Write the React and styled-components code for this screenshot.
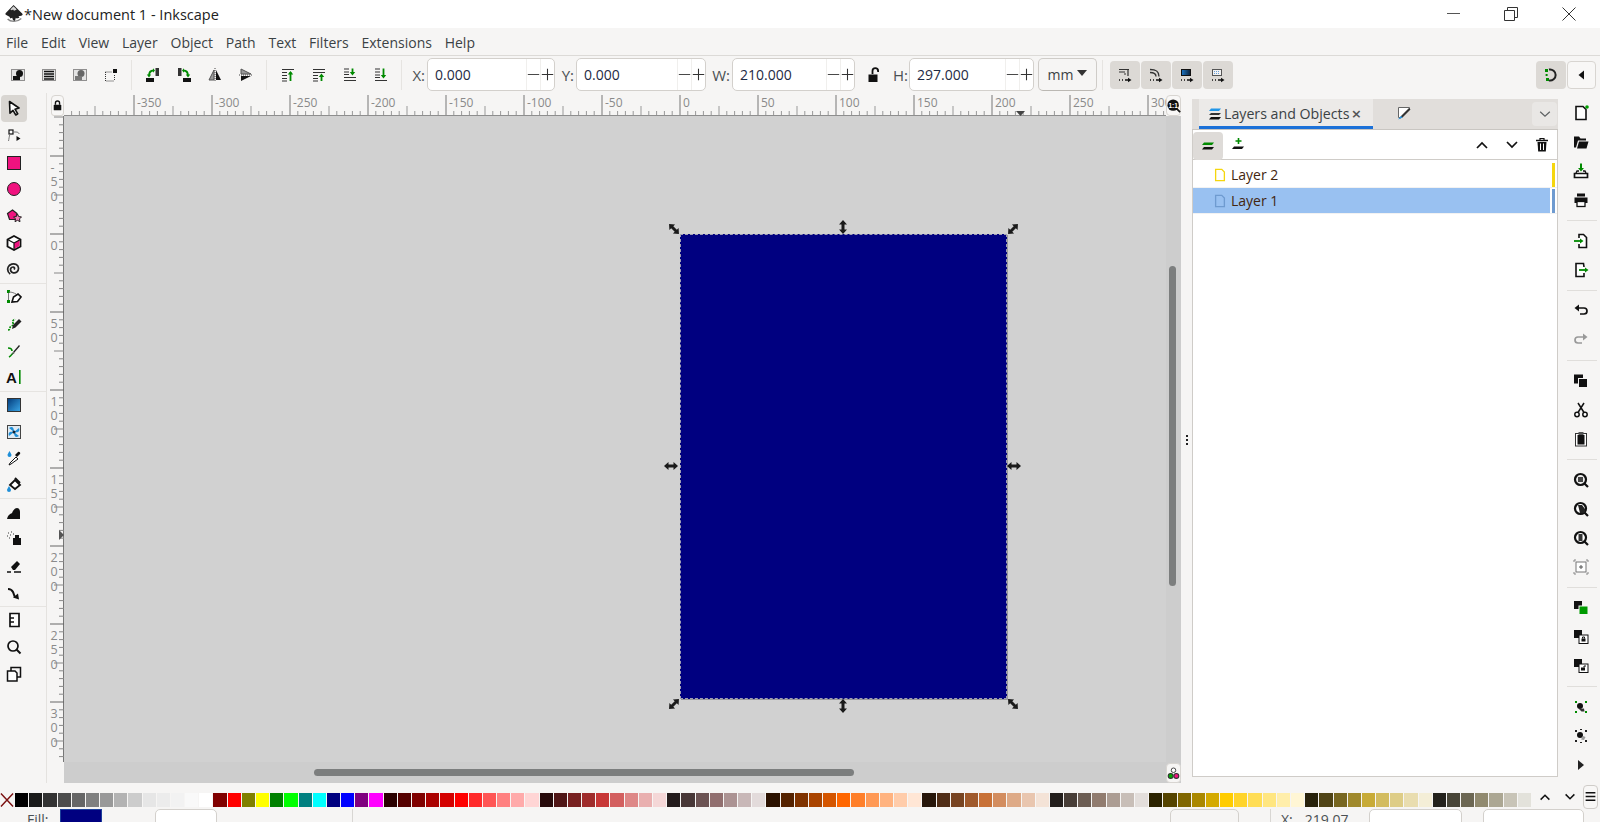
import styled, { createGlobalStyle } from 'styled-components'

const GlobalStyle = createGlobalStyle`
	html, body { margin: 0; padding: 0; height: 100%; overflow: hidden; background: #f6f5f4; }
	* { box-sizing: border-box; }
	body { font-family: 'Open Sans', 'Liberation Sans', sans-serif; color: #2e3436; }
`

const G = '#008a00'
const P = '#f0127f'
const K = '#111'

const dotted = <rect x='1.5' y='2.5' width='13' height='11' fill='#e4e4e4' stroke='#333' strokeDasharray='1 1' />
const lines = (d) => <path d={d} fill='none' stroke='#333' strokeWidth='1.2' />
const doc = <path d='M3 1.5h7l3 3v10H3z' fill='#fff' stroke={K} strokeWidth='1.6' />

const glyphs = {
	selAll: <>{dotted}<circle cx='9.5' cy='6.5' r='3.5' fill={K} /><rect x='3' y='9' width='7' height='4' fill={K} /></>,
	selLayers: <>{dotted}<path d='M3 4.5h10M3 7h10M3 9.5h10M3 12h10' stroke={K} strokeWidth='1.4' /></>,
	selInvert: <>{dotted}<circle cx='9' cy='6.5' r='3.5' fill='#666' /><rect x='3' y='9' width='7' height='4' fill='#777' /></>,
	selNone: <><path d='M2.5 5v9h9' fill='none' stroke='#333' strokeDasharray='1 1' /><rect x='10' y='2' width='4' height='4' fill={K} /><path d='M2.5 5H9M11.5 8v6' stroke='#333' strokeDasharray='1 1' /></>,
	rotCcw: <><rect x='1' y='11' width='8' height='4' fill={K} /><rect x='10.5' y='1' width='3.5' height='8' fill='#333' /><path d='M8.5 3.5C6 3.5 4 5 4 9' fill='none' stroke={G} strokeWidth='1.8' /><path d='M1.8 7.5h4.4L4 10.5zM8 1.2v4.6l2-2.3z' fill={G} /></>,
	rotCw: <><rect x='7' y='11' width='8' height='4' fill={K} /><rect x='2' y='1' width='3.5' height='8' fill='#333' /><path d='M7.5 3.5C10 3.5 12 5 12 9' fill='none' stroke={G} strokeWidth='1.8' /><path d='M14.2 7.5H9.8l2.2 3zM8 1.2v4.6L6 3.5z' fill={G} /></>,
	flipH: <><path d='M7 3v10H2z' fill='#999' stroke='#555' /><path d='M9 3v10h5z' fill={K} /><path d='M8 1v14' stroke='#444' strokeDasharray='1 1' /></>,
	flipV: <><path d='M3 7h10L3 2z' fill='#999' stroke='#555' /><path d='M3 9h10L3 14z' fill={K} /><path d='M1 8h14' stroke='#444' strokeDasharray='1 1' /></>,
	raiseTop: <>{lines('M2 2.5h12M2 5.5h5M2 8.5h5M2 11.5h5M2 14h5')}<path d='M10.5 14V5' stroke={G} strokeWidth='1.8' /><path d='M7.8 7.5l2.7-3.5 2.7 3.5z' fill={G} /></>,
	raise: <>{lines('M2 2.5h12M2 5.5h12M2 8.5h5M2 11.5h5M2 14h5')}<path d='M10.5 14V8' stroke={G} strokeWidth='1.8' /><path d='M7.8 10l2.7-3.5 2.7 3.5z' fill={G} /></>,
	lower: <>{lines('M2 2h5M2 5h5M2 7.5h5M2 10.5h12M2 13.5h12')}<path d='M10.5 1.5V7' stroke={G} strokeWidth='1.8' /><path d='M7.8 5l2.7 3.5L13.2 5z' fill={G} /></>,
	lowerBottom: <>{lines('M2 2h5M2 5h5M2 8h5M2 10.5h5M2 13.5h12')}<path d='M10.5 1.5V10' stroke={G} strokeWidth='1.8' /><path d='M7.8 8l2.7 3.5L13.2 8z' fill={G} /></>,
	tfA: <>{lines('M2 2.5h10M2 5h6M11 3v6M7 7h2')}<path d='M2 13h1M5 13h1M8 13h4' stroke={K} strokeWidth='1.4' /><path d='M11 10.8l3.5 2.2-3.5 2.2z' fill={K} /></>,
	tfB: <><path d='M2 2.5c5 0 9 1 9 7M2 5.5c3 0 6 .5 6 4' fill='none' stroke='#333' strokeWidth='1.3' /><path d='M2 13h1M5 13h1M8 13h4' stroke={K} strokeWidth='1.4' /><path d='M11 10.8l3.5 2.2-3.5 2.2z' fill={K} /></>,
	tfC: <><defs><linearGradient id='tfc' x1='0' y1='0' x2='1' y2='0'><stop offset='0' stopColor='#1c77c8' /><stop offset='1' stopColor='#0c2036' /></linearGradient></defs><rect x='2.5' y='2.5' width='9' height='6' fill='url(#tfc)' stroke={K} /><path d='M2 13h1M5 13h1M8 13h4' stroke={K} strokeWidth='1.4' /><path d='M11 10.8l3.5 2.2-3.5 2.2z' fill={K} /></>,
	tfD: <><rect x='2.5' y='2.5' width='9' height='6' fill='#f2f2f2' stroke='#555' /><path d='M4 4.5h6M4 6.5h6' stroke='#6a9fd8' strokeDasharray='1 1' /><path d='M2 13h1M5 13h1M8 13h4' stroke={K} strokeWidth='1.4' /><path d='M11 10.8l3.5 2.2-3.5 2.2z' fill={K} /></>,
	snap: <><path d='M6 2.5a5.6 5.6 0 1 1 0 11' fill='none' stroke='#222' strokeWidth='2' /><rect x='2' y='2' width='3' height='3' fill={G} /><rect x='2.6' y='7' width='2' height='2' fill={G} /><rect x='3' y='11' width='3' height='3' fill={G} /></>,
	left: <path d='M10 3.5v9L4.5 8z' fill={K} />,
	lock: <><rect x='2.5' y='7' width='11' height='8' rx='1' fill={K} /><path d='M5 7V4.5a3 3 0 0 1 6 0V7' fill='none' stroke={K} strokeWidth='2' /></>,
	unlock: <><rect x='2.5' y='7.5' width='9' height='7.5' fill={K} /><path d='M6.5 7V4a2.8 2.8 0 0 1 5.6 0v1' fill='none' stroke={K} strokeWidth='1.8' /></>,
	select: <path d='M3.5 1.5l9.5 6.5-4 1.2 2.8 4.6-2 1.2-2.8-4.6-3 2.8z' fill='#fff' stroke={K} strokeWidth='1.6' strokeLinejoin='round' />,
	node: <><rect x='3' y='3' width='4' height='4' fill='#fff' stroke={K} strokeWidth='1.2' /><path d='M7 5h3c2 0 3 1 3 2M4 7c-1 3-1 5-1.500 7' fill='none' stroke='#777' /><path d='M10.500 9l4 2.500-4 2.500z' fill={K} /></>,
	rect: <rect x='1.5' y='1.5' width='13' height='13' fill={P} stroke='#222' />,
	circle: <circle cx='8' cy='8' r='6.5' fill={P} stroke='#222' />,
	star: <><path d='M6.500 2l4.500 3.500-1.500 6H3.500l-2-6z' fill={P} stroke='#222' strokeWidth='1.2' /><path d='M11.500 6l1.200 2.600 2.800.3-2 2 .5 2.800-2.500-1.400-2.500 1.400.5-2.800-2-2 2.800-.3z' fill='#f77ab8' stroke='#222' /></>,
	cube: <><path d='M8 1l6.500 3.500v7L8 15l-6.500-3.500v-7z' fill='#fff' stroke={K} strokeWidth='1.8' /><path d='M8 8l5.500-3v6L8 14z' fill={P} /><path d='M8 8v6.500M8 8L2 4.800M8 8l6-3.200' stroke={K} strokeWidth='1.2' /></>,
	spiral: <path d='M8 8.500c1-1 .5-2.500-1-2.500-2 0-3 2-2.200 4 1 2 4 2.500 6 1 2.500-2 2.200-6-.5-7.500C7.500 2 3.500 3 2.200 6c-1 2.500 0 5.500 2 7' fill='none' stroke='#222' strokeWidth='1.7' />,
	pen: <><rect x='1' y='11' width='3' height='3' fill={G} /><rect x='1' y='1' width='3' height='3' fill={G} /><path d='M2.500 4v7M3 3c3 0 5 1 7 2' stroke='#777' fill='none' /><path d='M6 13l1.500-5L12 5l3 3-3.500 4.500z' fill='#fff' stroke={K} strokeWidth='1.6' /></>,
	pencil: <><path d='M2 14c3 0 1-3 3-4s3 0 2-3 1-3 2-4' fill='none' stroke={G} strokeWidth='1.6' strokeDasharray='2 1' /><path d='M7 9l6-6 2.500 2.500-6 6L6 13z' fill='#222' /></>,
	callig: <><path d='M3 14c2-1 3-3 4-4M2 5c2 0 4 1 4 3' fill='none' stroke={G} strokeWidth='1.6' /><path d='M7 9l6-7 1 1-6 7z' fill='#222' /><path d='M7 9l-1.500 3 3-1.800z' fill='#555' /></>,
	text: <><text x='0' y='14' fontFamily='Liberation Sans' fontSize='15' fontWeight='700' fill={K}>A</text><rect x='13' y='1' width='1.600' height='14' fill={G} /></>,
	gradient: <><defs><linearGradient id='grad' x1='0' y1='0' x2='1' y2='1'><stop offset='0' stopColor='#023a7a' /><stop offset='1' stopColor='#3ba7e8' /></linearGradient></defs><rect x='1.500' y='1.500' width='13' height='13' fill='url(#grad)' stroke='#333' /></>,
	mesh: <><rect x='1.500' y='1.500' width='13' height='13' fill='#dfeaf3' stroke='#444' /><path d='M8 8L3 4c3-2 5-1 5 4zM8 8l5-4c1 3 0 5-5 4zM8 8l5 4c-3 2-5 1-5-4zM8 8l-5 4c-1-3 0-5 5-4z' fill='#1f8fd8' /><circle cx='8' cy='8' r='1.500' fill='#123' /></>,
	dropper: <><path d='M5 14l-2 1 1-2 6-6 2 2z' fill='#fff' stroke={K} /><path d='M9 5l3-3c1-1 3 1 2 2l-3 3z' fill={K} /><path d='M3.500 1c1 2 2 3 2 4a2 2 0 0 1-4 0c0-1 1-2 2-4z' fill='#1f8fd8' /></>,
	bucket: <><path d='M4 8l5-5 5 5-5 4z' fill='#fff' stroke={K} strokeWidth='1.800' /><path d='M9 1l5 5' stroke={K} strokeWidth='2' /><path d='M3 9c1 2 2 3 2 4a2 2 0 0 1-4 0c0-1 1-2 2-4z' fill='#1f8fd8' /></>,
	tweak: <path d='M1 14c1-4 3-5 5-6 1-3 3-5 5-5 2 0 3 2 3 4v7z' fill={K} />,
	spray: <><rect x='7' y='7' width='8' height='7' fill={K} /><rect x='9' y='4' width='4' height='3' fill={K} /><path d='M2 2h1M5 1h1M1 5h1M4 4h1M7 3h1M3 7h1' stroke='#777' strokeWidth='1.500' /></>,
	eraser: <><path d='M5 9l6-6 3 3-5 6H7z' fill={K} /><path d='M1 14h4M8 14h7' stroke={K} strokeWidth='1.400' /></>,
	connector: <><path d='M2 4c3 0 4 1 5 3s1 4 2 5' fill='none' stroke={K} strokeWidth='2' /><path d='M7 12.500l6 2-1-6z' fill={K} /></>,
	pages: <><path d='M4 1.500h9v13H4z' fill='#fff' stroke={K} strokeWidth='1.700' /><path d='M4 6h4M4 10h4' stroke={K} strokeWidth='1.300' /></>,
	zoom: <><circle cx='7' cy='7' r='5' fill='none' stroke={K} strokeWidth='1.700' /><path d='M10.500 10.500L14.500 14.500' stroke={K} strokeWidth='2' /></>,
	pageset: <><path d='M5 5V1.500h9.500V11H11' fill='none' stroke={K} strokeWidth='1.500' /><path d='M1.500 5H9l2 2v8H1.500z' fill='#fff' stroke={K} strokeWidth='1.500' /></>,
	fileNew: <>{doc}<circle cx='14' cy='2' r='1.800' fill='#00a000' /></>,
	open: <path d='M1 13.500V2.500h5l1.500 2H13v2H5l-2 7zM4 14.500L6 7.500h9.500l-2 7z' fill={K} />,
	save: <><path d='M8 0.500v6' stroke={G} strokeWidth='2' /><path d='M5 5l3 3.500L11 5z' fill={G} /><path d='M1.500 10.500h13v4h-13z' fill='#fff' stroke={K} strokeWidth='1.700' /><path d='M3 10l1-2h2M13 10l-1-2h-2' stroke={K} strokeWidth='1.300' fill='none' /></>,
	print: <><rect x='4' y='1.500' width='8' height='3' fill={K} /><rect x='1.500' y='5.500' width='13' height='5.500' fill={K} /><rect x='4' y='9.500' width='8' height='5' fill='#fff' stroke={K} strokeWidth='1.300' /></>,
	importDoc: <><path d='M6 5V1.500h4.500l3 3v10H6V11' fill='#fff' stroke={K} strokeWidth='1.600' /><path d='M1 8h7' stroke={G} strokeWidth='1.800' /><path d='M7 5.500l3.500 2.500L7 10.500z' fill={G} /></>,
	exportDoc: <><path d='M11 5l-.5-3.500H3v13h8V11' fill='#fff' stroke={K} strokeWidth='1.600' /><path d='M6 8h7' stroke={G} strokeWidth='1.800' /><path d='M12 5.500L15.500 8 12 10.500z' fill={G} /></>,
	undo: <><path d='M5 5h6c2 0 3 1.500 3 3s-1 3-3 3H7' fill='none' stroke={K} strokeWidth='1.700' /><path d='M6 1.500v7L1.500 5z' fill={K} /></>,
	redo: <><path d='M11 5H5C3 5 2 6.500 2 8s1 3 3 3h4' fill='none' stroke='#999' strokeWidth='1.700' /><path d='M10 1.500v7L14.500 5z' fill='#999' /></>,
	copy: <><rect x='1' y='1.500' width='9' height='9' fill={K} /><rect x='5.500' y='5.500' width='9' height='9' fill={K} stroke='#f6f5f4' /></>,
	cut: <><circle cx='4' cy='12.500' r='2.200' fill='#fff' stroke={K} strokeWidth='1.500' /><circle cx='12' cy='12.500' r='2.200' fill='#fff' stroke={K} strokeWidth='1.500' /><path d='M5 10.500L11 1M11 10.500L5 1' stroke={K} strokeWidth='1.500' /></>,
	paste: <><rect x='2.500' y='2.500' width='11' height='12.500' fill='#fff' stroke='#333' /><rect x='4.500' y='4' width='7' height='9.500' fill={K} /><rect x='5.500' y='1' width='5' height='3' fill='#555' /></>,
	zoomSel: <><circle cx='7.500' cy='7.500' r='5.500' fill='#eee' stroke={K} strokeWidth='2.200' /><rect x='5' y='5' width='5' height='5' fill='#444' /><path d='M11.500 11.500L15 15' stroke={K} strokeWidth='2.200' /></>,
	zoomDraw: <><circle cx='7.500' cy='7.500' r='5.500' fill='#fff' stroke={K} strokeWidth='2.200' /><path d='M5 4h4l3 4v4H7z' fill='#222' /><path d='M11.500 11.500L15 15' stroke={K} strokeWidth='2.200' /></>,
	zoomPage: <><circle cx='7.500' cy='7.500' r='5.500' fill='#fff' stroke={K} strokeWidth='2.200' /><rect x='5.500' y='4' width='4' height='7' fill='#333' /><path d='M11.500 11.500L15 15' stroke={K} strokeWidth='2.200' /></>,
	zoomCenter: <><rect x='3' y='3' width='10' height='10' fill='#fff' stroke='#777' /><path d='M6 8h4M8 6v4' stroke='#555' /><path d='M1 3V1h2M13 1h2v2M1 13v2h2M13 15h2v-2' fill='none' stroke='#888' /></>,
	dupGreen: <><rect x='1' y='1' width='8' height='8' fill={K} /><rect x='6' y='6' width='9' height='8.500' fill='#009a00' stroke='#f6f5f4' /></>,
	clone: <><rect x='1' y='1' width='8' height='8' fill={K} /><rect x='6' y='6' width='9' height='8.500' fill='#fff' stroke={K} /><rect x='8.500' y='9.500' width='4' height='3' fill={K} /><path d='M9.500 9.500V8h2v1.500' stroke={K} fill='none' /></>,
	unclone: <><rect x='1' y='1' width='8' height='8' fill={K} /><rect x='6' y='6' width='9' height='8.500' fill='#fff' stroke={K} /><rect x='8' y='9.500' width='4' height='3' fill={K} /><path d='M11 9.500V8h2' stroke={K} fill='none' /></>,
	group: <><path d='M2 2h2v2H2zM12 2h2v2h-2zM2 12h2v2H2zM12 12h2v2h-2z' fill={G} /><circle cx='7' cy='7' r='3' fill={K} /><path d='M6 10l5-.5.500 3-3 0z' fill='#333' /></>,
	ungroup: <><path d='M2 2h2v2H2zM12 2h2v2h-2zM2 12h2v2H2zM12 12h2v2h-2zM7 1h2v1H7zM7 14h2v1H7z' fill='#222' /><circle cx='7' cy='7' r='3' fill={K} /><path d='M10 8l2.500 1-1.500 3-3-.5z' fill='#999' /></>,
	right: <path d='M5 3v10l6-5z' fill='#222' />,
	up: <path d='M3 11l5-5 5 5' fill='none' stroke={K} strokeWidth='1.700' />,
	down: <path d='M3 5l5 5 5-5' fill='none' stroke={K} strokeWidth='1.700' />,
	chevronGrey: <path d='M2.500 5.500L8 10.500l5.500-5' fill='none' stroke='#5d6163' strokeWidth='1.400' />,
	menu: <path d='M2 3.500h12M2 8h12M2 12.500h12' stroke={K} strokeWidth='1.800' />,
	trash: <><path d='M2 3.500h12' stroke={K} strokeWidth='1.500' /><path d='M6 3V1.500h4V3' fill='none' stroke={K} strokeWidth='1.200' /><path d='M3.500 5h9l-.7 9.500H4.200z' fill={K} /><path d='M6.500 6.500v6.500M9.500 6.500v6.500' stroke='#fff' /></>,
	layersTab: <><path d='M4 2.500h10l-2 2.500H2z' fill='#2196e8' /><path d='M4 7h10l-2 2H2z' fill='#333' /><path d='M4 11h10l-2 2.500H2z' fill={K} /></>,
	layersGreen: <><path d='M4 4.500h10l-2 2.500H2z' fill={G} /><path d='M4 9h10l-2 2.500H2z' fill={K} /></>,
	layerAdd: <><path d='M8.500 1v6M5.500 4h6' stroke={G} strokeWidth='1.600' /><path d='M4 9.500h10l-2 2.500H2z' fill={K} /></>,
	fillTab: <><path d='M2.500 2.500h11v2l-8 8h-3z' fill='#fff' stroke='#666' /><path d='M3 14l2-3 8-8 1.500 1.500-8 8z' fill='#333' /><path d='M2 14.500l3-3.500 1.500 1.500z' fill='#2196e8' /></>,
	minus: <path d='M1 8h14' stroke='#333' strokeWidth='1.100' />,
	plus: <path d='M1 8h14M8 1v14' stroke='#333' strokeWidth='1.300' />,
	colorMgmt: <><circle cx='8' cy='4' r='2.800' fill='#fff' stroke='#222' /><circle cx='4.500' cy='11' r='3' fill='#0a0' stroke='#333' strokeWidth='1.400' /><circle cx='11.500' cy='11' r='3' fill={P} stroke='#333' strokeWidth='1.400' /></>,
	zoom11: <><circle cx='7' cy='7' r='6.500' fill={K} /><path d='M11 11l4 4' stroke={K} strokeWidth='2' /><text x='7' y='10' textAnchor='middle' fontSize='7.500' fontWeight='700' fill='#fff' fontFamily='Liberation Sans'>1:1</text></>,
}

const Svg = styled.svg`
	width: ${(p) => p.$size || 16}px;
	height: ${(p) => p.$size || 16}px;
	flex: none;
	display: block;
`

const Icon = ({ name, size }) => (
	<Svg viewBox='0 0 16 16' $size={size}>
		{glyphs[name]}
	</Svg>
)

const Root = styled.div`
	width: 1600px;
	height: 822px;
	display: flex;
	flex-direction: column;
	overflow: hidden;
	background: #f6f5f4;
`

const TitleBar = styled.div`
	height: 28px;
	background: #fff;
	display: flex;
	align-items: center;
	padding: 0 2px 0 4px;
	flex: none;
`

const TitleText = styled.span`
	font-size: 14.5px;
	margin-left: 0;
	color: #222;
	flex: 1;
`

const WinButton = styled.div`
	width: 58px;
	height: 28px;
	display: flex;
	align-items: center;
	justify-content: center;
`

const MenuBar = styled.div`
	height: 28px;
	display: flex;
	align-items: center;
	padding: 2px 0 0 6px;
	gap: 12.8px;
	font-size: 14px;
	color: #3b4245;
	border-bottom: 1px solid #dcdad7;
	flex: none;
`

const Toolbar = styled.div`
	height: 37px;
	display: flex;
	align-items: center;
	padding-left: 2px;
	flex: none;
`

const ToolIcon = styled.div`
	width: 31px;
	height: 28px;
	display: flex;
	align-items: center;
	justify-content: center;
`

const ToolSep = styled.div`
	width: 1px;
	height: 30px;
	margin: 0 5px;
	background: #e6e4e1;
	flex: none;
`

const FieldLabel = styled.span`
	width: ${(p) => p.$w}px;
	text-align: right;
	padding-right: 2px;
	font-size: 15px;
	color: #4a5053;
	flex: none;
`

const Spin = styled.div`
	width: ${(p) => p.$w}px;
	height: 33px;
	background: #fff;
	border: 1px solid #d3d0cc;
	border-radius: 5px;
	display: flex;
	align-items: center;
	flex: none;
`

const SpinValue = styled.span`
	flex: 1;
	padding-left: 7px;
	font-size: 14px;
	color: #1e2a44;
`

const SpinBtn = styled.span`
	width: 14px;
	height: 100%;
	display: flex;
	align-items: center;
	justify-content: center;
	border-left: 1px solid #f0efed;
`

const LockWrap = styled.div`
	width: 38px;
	display: flex;
	justify-content: center;
	flex: none;
`

const UnitButton = styled.div`
	width: 59px;
	height: 33px;
	margin-left: 4px;
	background: #f6f5f4;
	border: 1px solid #cfccc8;
	border-bottom-color: #bbb8b3;
	border-radius: 5px;
	display: flex;
	align-items: center;
	justify-content: center;
	gap: 4px;
	font-size: 14px;
	color: #3b4245;
	flex: none;
`

const Caret = styled.span`
	width: 0;
	height: 0;
	border-left: 5px solid transparent;
	border-right: 5px solid transparent;
	border-top: 6px solid #333;
	margin-bottom: 3px;
`

const TfRow = styled.div`
	display: flex;
	gap: 1px;
	margin-left: 2px;
`

const TfButton = styled.div`
	width: 30px;
	height: 28px;
	border-radius: 4px;
	background: #dcd9d5;
	display: flex;
	align-items: center;
	justify-content: center;
`

const ToolbarEnd = styled.div`
	margin-left: auto;
	padding-right: 4px;
	display: flex;
	gap: 1px;
`

const ArrowButton = styled.div`
	width: 29px;
	height: 28px;
	background: #f8f7f6;
	border: 1px solid #d8d5d1;
	border-radius: 4px;
	display: flex;
	align-items: center;
	justify-content: center;
`

const Main = styled.div`
	height: 690px;
	display: flex;
	flex: none;
`

const ToolBox = styled.div`
	width: 47px;
	flex: none;
	padding-top: 2px;
	border-right: 1px solid #e4e2df;
`

const BoxTool = styled.div`
	width: 26px;
	height: 26.7px;
	margin-left: 1px;
	border-radius: 4px;
	background: ${(p) => (p.$active ? '#d9d6d2' : 'transparent')};
	display: flex;
	align-items: center;
	justify-content: center;
`

const BoxSep = styled.div`
	height: 1px;
	background: #e6e4e1;
`

const Workspace = styled.div`
	width: 1134px;
	flex: none;
	display: grid;
	grid-template-columns: 17px 1fr;
	grid-template-rows: 23px 1fr;
`

const Corner = styled.div`
	display: flex;
	align-items: flex-end;
	justify-content: flex-end;
`

const LockTab = styled.div`
	width: 13px;
	height: 21px;
	background: #f8f7f6;
	border: 1px solid #d8d5d1;
	border-radius: 4px 4px 3px 3px;
	display: flex;
	align-items: center;
	justify-content: center;
`

const HRuler = styled.div`
	height: 23px;
	display: flex;
	overflow: hidden;
`

const RulerSvg = styled.svg`
	display: block;
	flex: none;
`

const RulerCorner = styled.div`
	width: 15px;
	height: 21px;
	margin-top: 2px;
	background: #f8f7f6;
	border: 1px solid #d8d5d1;
	border-radius: 4px;
	display: flex;
	align-items: center;
	justify-content: center;
	flex: none;
`

const Canvas = styled.div`
	position: relative;
	background: #d1d1d1;
	overflow: hidden;
`

const TrackV = styled.div`
	position: absolute;
	top: 0;
	right: 0;
	bottom: 0;
	width: 15px;
	background: #cdcdcd;
`

const TrackH = styled.div`
	position: absolute;
	left: 0;
	right: 0;
	bottom: 0;
	height: 21px;
	background: #cdcdcd;
`

const ThumbV = styled.div`
	position: absolute;
	top: 150px;
	right: 5px;
	width: 7px;
	height: 320px;
	border-radius: 4px;
	background: #7c7e7e;
`

const ThumbH = styled.div`
	position: absolute;
	left: 250px;
	bottom: 7px;
	width: 540px;
	height: 7px;
	border-radius: 4px;
	background: #7c7e7e;
`

const ColorButton = styled.div`
	position: absolute;
	right: 0;
	bottom: 0;
	width: 15px;
	height: 20px;
	background: #f6f5f4;
	border: 1px solid #d8d5d1;
	border-radius: 4px;
	display: flex;
	align-items: center;
	justify-content: center;
`

const Page = styled.div`
	position: absolute;
	left: 616px;
	top: 118px;
	width: 327px;
	height: 465px;
	background: #000080;
	border: 1px dashed #a0a0b4;
	box-shadow: 1px 1px 0 #9a9a9a;
`

const Handle = styled.div`
	position: absolute;
	left: ${(p) => p.$x - 8}px;
	top: ${(p) => p.$y - 8}px;
	transform: rotate(${(p) => p.$deg}deg);
`

const Gutter = styled.div`
	width: 11px;
	flex: none;
	display: flex;
	flex-direction: column;
	align-items: center;
	justify-content: center;
	gap: 2px;
	padding-top: 4px;
`

const Dot = styled.span`
	width: 2px;
	height: 2px;
	background: #222;
`

const Panel = styled.div`
	width: 366px;
	flex: none;
	margin: 6px 0;
	background: #fff;
	border: 1px solid #cfccc8;
	border-top: none;
	display: flex;
	flex-direction: column;
`

const TabBar = styled.div`
	height: 31px;
	background: #e1dedb;
	border-bottom: 1px solid #c9c6c2;
	display: flex;
	align-items: stretch;
	padding-left: 7px;
	margin: 0 -1px;
	flex: none;
`

const ActiveTab = styled.div`
	width: 174px;
	background: #eceae8;
	border-bottom: 3px solid #1c71d8;
	display: flex;
	align-items: center;
	padding-left: 8px;
	padding-top: 2px;
	gap: 1px;
	font-size: 14.2px;
	color: #3b4245;
`

const TabClose = styled.span`
	margin-left: 1px;
	font-size: 17px;
	font-weight: 600;
	line-height: 1;
	color: #555;
`

const OtherTab = styled.div`
	width: 62px;
	display: flex;
	align-items: center;
	justify-content: center;
	padding-bottom: 3px;
`

const TabMenu = styled.div`
	margin: 3px 1px 3px auto;
	width: 25px;
	background: #e9e7e5;
	border-radius: 4px;
	display: flex;
	align-items: center;
	justify-content: center;
`

const PanelTools = styled.div`
	height: 30px;
	display: flex;
	align-items: center;
	border-bottom: 1px solid #cfccc8;
	flex: none;
`

const PanelTool = styled.div`
	width: 30px;
	height: 28px;
	border-radius: 4px;
	background: ${(p) => (p.$active ? '#dedbd8' : 'transparent')};
	display: flex;
	align-items: center;
	justify-content: center;
	margin-top: ${(p) => (p.$active ? 2 : 0)}px;
`

const ToolGap = styled.div`
	flex: 1;
`

const LayerList = styled.div`
	padding-top: 2px;
`

const LayerRow = styled.div`
	height: 26px;
	display: flex;
	align-items: center;
	padding-left: 20px;
	padding-right: 2px;
	gap: 6px;
	font-size: 14px;
	color: #43260f;
	border-bottom: 1px solid #f2f2f2;
`

const LayerName = styled.div`
	flex: 1;
	align-self: stretch;
	display: flex;
	align-items: center;
	gap: 4px;
	margin-left: -20px;
	padding-left: 20px;
	background: ${(p) => (p.$selected ? '#99c1f1' : 'transparent')};
`

const LayerBar = styled.div`
	width: 3px;
	height: 24px;
	margin-left: -4px;
	background: ${(p) => p.$color};
`

const RightBar = styled.div`
	width: 42px;
	flex: none;
	padding-top: 5.5px;
`

const RightTool = styled.div`
	height: 29px;
	display: flex;
	align-items: center;
	justify-content: center;
	padding-left: 4px;
`

const RightSep = styled.div`
	height: 12px;
	margin-left: 9px;
	width: 30px;
	display: flex;
	align-items: center;
	&::after {
		content: '';
		width: 100%;
		height: 1px;
		background: #e0dedb;
	}
`

const PaletteRow = styled.div`
	height: 26px;
	padding-top: 10px;
	display: flex;
	flex: none;
`

const NoColor = styled.div`
	width: 15px;
	height: 14px;
	flex: none;
`

const Swatches = styled.div`
	width: 1516px;
	height: 14px;
	display: grid;
	grid-template-columns: repeat(107, 1fr);
	gap: 1px;
	flex: none;
`

const Swatch = styled.div`
	background: ${(p) => p.$c};
`

const PaletteEnd = styled.div`
	flex: 1;
	display: flex;
	align-items: center;
	justify-content: flex-end;
	gap: 11px;
	margin-top: -9px;
	padding-right: 2px;
`

const PaletteMenu = styled.div`
	width: 15px;
	height: 24px;
	background: #f8f7f6;
	border: 1px solid #cfccc8;
	border-radius: 4px;
	display: flex;
	align-items: center;
	justify-content: center;
	margin-left: -5px;
`

const StatusBar = styled.div`
	height: 13px;
	display: flex;
	overflow: hidden;
	flex: none;
	font-size: 14px;
	color: #4a5053;
`

const StatusLabel = styled.span`
	width: ${(p) => p.$w}px;
	padding-left: ${(p) => p.$pad}px;
	line-height: 18px;
	padding-top: 2px;
	flex: none;
`

const CoordValue = styled.span`
	margin-left: 12px;
`

const FillSwatch = styled.div`
	width: 42px;
	background: #000080;
	border: 1px solid #1c3f9a;
	border-bottom: none;
	flex: none;
`

const StatusBox = styled.div`
	width: ${(p) => p.$w}px;
	margin-left: ${(p) => p.$ml}px;
	height: 20px;
	background: ${(p) => (p.$plain ? '#f6f5f4' : '#fff')};
	border: 1px solid #d3d0cc;
	border-radius: 5px;
	flex: none;
`

const StatusSep = styled.div`
	width: 1px;
	margin-left: ${(p) => p.$ml}px;
	background: #d8d6d3;
	flex: none;
`

const menuItems = ['File', 'Edit', 'View', 'Layer', 'Object', 'Path', 'Text', 'Filters', 'Extensions', 'Help']

const leftTools = [
	['select', 'node'],
	['rect', 'circle', 'star', 'cube', 'spiral'],
	['pen', 'pencil', 'callig', 'text'],
	['gradient', 'mesh', 'dropper', 'bucket'],
	['tweak', 'spray', 'eraser', 'connector'],
	['pages', 'zoom', 'pageset'],
]

const rightTools = [
	['fileNew', 'open', 'save', 'print'],
	['importDoc', 'exportDoc'],
	['undo', 'redo'],
	['copy', 'cut', 'paste'],
	['zoomSel', 'zoomDraw', 'zoomPage', 'zoomCenter'],
	['dupGreen', 'clone', 'unclone'],
	['group', 'ungroup', 'right'],
]

const palette = (
	'000000 1a1a1a 333333 4d4d4d 666666 808080 999999 b3b3b3 cccccc e6e6e6 ececec f2f2f2 f9f9f9 ffffff ' +
	'800000 ff0000 808000 ffff00 008000 00ff00 008080 00ffff 000080 0000ff 800080 ff00ff ' +
	'2b0000 550000 800000 aa0000 d40000 ff0000 ff2a2a ff5555 ff8080 ffaaaa ffd5d5 ' +
	'280b0b 501616 782121 a02c2c c83737 d35f5f de8787 e9afaf f4d7d7 ' +
	'241c1c 483737 6c5353 916f6f ac9393 c8b7b7 e3dbdb ' +
	'2b1100 552200 803300 aa4400 d45500 ff6600 ff7f2a ff9955 ffb380 ffccaa ffe6d5 ' +
	'28170b 502d16 784421 a05a2c c87137 d38d5f deaa87 e9c6af f4e3d7 ' +
	'241f1c 483e37 6c5d53 917c6f ac9d93 c8beb7 e3dedb ' +
	'2b2200 554400 806600 aa8800 d4aa00 ffcc00 ffd42a ffdd55 ffe680 ffeeaa fff6d5 ' +
	'28220b 504416 786721 a0892c c8ab37 d3bc5f decd87 e9ddaf f4eed7 ' +
	'24221c 484537 6c6753 918a6f aca793 c8c4b7 e3e2db'
).split(' ')

const handles = [
	{ x: 610, y: 113, deg: 45 },
	{ x: 779, y: 111, deg: 90 },
	{ x: 949, y: 113, deg: 135 },
	{ x: 607, y: 350, deg: 0 },
	{ x: 950, y: 350, deg: 0 },
	{ x: 610, y: 588, deg: 135 },
	{ x: 779, y: 590, deg: 90 },
	{ x: 949, y: 588, deg: 45 },
]

const rulerStep = 7.8

// horizontal ruler: x 64 -> 1166, zero sits at 680
const HorizontalRuler = () => {
	const zero = 616
	const ticks = []
	for (let i = -78; i <= 62; i++) {
		const x = zero + i * rulerStep
		if (x < 0) continue
		const major = i % 10 === 0
		const mid = i % 5 === 0
		const h = major ? 21 : mid ? 10 : 5
		ticks.push(<line key={i} x1={x} x2={x} y1={23 - h} y2={22} stroke={major ? '#777' : '#999'} />)
		if (major) {
			ticks.push(
				<text key={`t${i}`} x={x + 3} y={14} fontSize='12' fill='#8a8a8a' fontFamily='Open Sans'>
					{i * 5}
				</text>
			)
		}
	}
	return (
		<RulerSvg width='1102' height='23'>
			<line x1='0' x2='1102' y1='22.5' y2='22.5' stroke='#8e8e8e' />
			{ticks}
			<path d='M952 18h9l-4.500 5z' fill='#444' />
		</RulerSvg>
	)
}

// vertical ruler: y 116 -> 762, zero sits at 234
const VerticalRuler = () => {
	const zero = 118
	const ticks = []
	for (let i = -15; i <= 83; i++) {
		const y = zero + i * rulerStep
		if (y < 0 || y > 646) continue
		const major = i % 10 === 0
		const mid = i % 5 === 0
		const w = major ? 14 : mid ? 10 : 5
		ticks.push(<line key={i} x1={17 - w} x2={17} y1={y} y2={y} stroke={major ? '#666' : '#888'} />)
		if (major) {
			String(i * 5)
				.split('')
				.forEach((c, n) => {
					ticks.push(
						<text key={`t${i}${n}`} x={3.5} y={y + 16 + n * 14.3} fontSize='12.5' fill='#8a8a8a' fontFamily='Open Sans'>
							{c}
						</text>
					)
				})
		}
	}
	return (
		<RulerSvg width='17' height='667'>
			<line x1='16.5' x2='16.5' y1='0' y2='646' stroke='#777' />
			{ticks}
			<path d='M12 414l5 5-5 5z' fill='#555' />
		</RulerSvg>
	)
}

const Logo = () => (
	<Svg viewBox='0 0 22 22' $size={20}>
		<path d='M10.500 1L20 10.500c1 1 .5 2-1 2.500l-3 .5 1 1.500-3 1-1-1-1 4-2-1-1-3-2 1-1-2-3-1.500C1.500 12 1 11 2 10z' fill='#222' />
		<path d='M10.500 2.500l-3.500 3.500 1.500 1 1.500-1 1 1.500 2-1 1-.5z' fill='#d5d5d5' />
		<path d='M4 16.500c3 3.500 11 3.500 15-.5' fill='none' stroke='#888' strokeWidth='1.500' />
	</Svg>
)

const Arrow = () => (
	<Svg viewBox='0 0 16 16' $size={16}>
		<path d='M1 8l4.500-4v2.500h5V4L15 8l-4.500 4V9.500h-5V12z' fill='#1a1a1a' />
	</Svg>
)

const NoColorMark = () => (
	<Svg viewBox='0 0 15 14' $size={14}>
		<path d='M1 0l13 14M14 0L1 14' stroke='#7a1010' strokeWidth='1.500' />
	</Svg>
)

const LayerIcon = ({ color }) => (
	<Svg viewBox='0 0 16 16' $size={14}>
		<path d='M3 1.500h7l3 3v10H3z' fill='none' stroke={color} strokeWidth='1.500' />
	</Svg>
)

const Spinner = ({ width, value }) => (
	<Spin $w={width}>
		<SpinValue>{value}</SpinValue>
		<SpinBtn>
			<Icon name='minus' size={13} />
		</SpinBtn>
		<SpinBtn>
			<Icon name='plus' size={13} />
		</SpinBtn>
	</Spin>
)

const App = () => {
	return (
		<Root>
			<GlobalStyle />
			<TitleBar>
				<Logo />
				<TitleText>*New document 1 - Inkscape</TitleText>
				<WinButton>
					<svg width='13' height='2'>
						<path d='M0 .5h13' stroke='#555' />
					</svg>
				</WinButton>
				<WinButton>
					<svg width='14' height='14'>
						<path d='M3.500 3V.500h10v10H11M.500 3.500h10v10H.500z' fill='none' stroke='#333' />
					</svg>
				</WinButton>
				<WinButton>
					<svg width='14' height='14'>
						<path d='M.500.500l13 13M13.500.500l-13 13' stroke='#333' />
					</svg>
				</WinButton>
			</TitleBar>

			<MenuBar>
				{menuItems.map((item) => (
					<span key={item}>{item}</span>
				))}
			</MenuBar>

			<Toolbar>
				{['selAll', 'selLayers', 'selInvert', 'selNone'].map((n) => (
					<ToolIcon key={n}>
						<Icon name={n} />
					</ToolIcon>
				))}
				<ToolSep />
				{['rotCcw', 'rotCw', 'flipH', 'flipV'].map((n) => (
					<ToolIcon key={n}>
						<Icon name={n} />
					</ToolIcon>
				))}
				<ToolSep />
				{['raiseTop', 'raise', 'lower', 'lowerBottom'].map((n) => (
					<ToolIcon key={n}>
						<Icon name={n} />
					</ToolIcon>
				))}
				<ToolSep />
				<FieldLabel $w={20}>X:</FieldLabel>
				<Spinner width={128} value='0.000' />
				<FieldLabel $w={21}>Y:</FieldLabel>
				<Spinner width={130} value='0.000' />
				<FieldLabel $w={26}>W:</FieldLabel>
				<Spinner width={123} value='210.000' />
				<LockWrap>
					<Icon name='unlock' />
				</LockWrap>
				<FieldLabel $w={16}>H:</FieldLabel>
				<Spinner width={125} value='297.000' />
				<UnitButton>
					mm
					<Caret />
				</UnitButton>
				<ToolSep />
				<TfRow>
					{['tfA', 'tfB', 'tfC', 'tfD'].map((n) => (
						<TfButton key={n}>
							<Icon name={n} />
						</TfButton>
					))}
				</TfRow>
				<ToolbarEnd>
					<TfButton>
						<Icon name='snap' />
					</TfButton>
					<ArrowButton>
						<Icon name='left' />
					</ArrowButton>
				</ToolbarEnd>
			</Toolbar>

			<Main>
				<ToolBox>
					{leftTools.map((group, g) => (
						<div key={g}>
							{g > 0 && <BoxSep />}
							{group.map((n) => (
								<BoxTool key={n} $active={n === 'select'}>
									<Icon name={n} />
								</BoxTool>
							))}
						</div>
					))}
				</ToolBox>

				<Workspace>
					<Corner>
						<LockTab>
							<Icon name='lock' size={11} />
						</LockTab>
					</Corner>
					<HRuler>
						<HorizontalRuler />
						<RulerCorner>
							<Icon name='zoom11' size={14} />
						</RulerCorner>
					</HRuler>
					<VerticalRuler />
					<Canvas>
						<TrackV />
						<TrackH />
						<ThumbV />
						<ThumbH />
						<Page />
						{handles.map((h) => (
							<Handle key={`${h.x}-${h.y}`} $x={h.x} $y={h.y} $deg={h.deg}>
								<Arrow />
							</Handle>
						))}
						<ColorButton>
							<Icon name='colorMgmt' size={13} />
						</ColorButton>
					</Canvas>
				</Workspace>

				<Gutter>
					<Dot />
					<Dot />
					<Dot />
				</Gutter>

				<Panel>
					<TabBar>
						<ActiveTab>
							<Icon name='layersTab' />
							Layers and Objects
							<TabClose>×</TabClose>
						</ActiveTab>
						<OtherTab>
							<Icon name='fillTab' />
						</OtherTab>
						<TabMenu>
							<Icon name='chevronGrey' size={14} />
						</TabMenu>
					</TabBar>
					<PanelTools>
						<PanelTool $active>
							<Icon name='layersGreen' />
						</PanelTool>
						<PanelTool>
							<Icon name='layerAdd' />
						</PanelTool>
						<ToolGap />
						<PanelTool>
							<Icon name='up' />
						</PanelTool>
						<PanelTool>
							<Icon name='down' />
						</PanelTool>
						<PanelTool>
							<Icon name='trash' />
						</PanelTool>
					</PanelTools>
					<LayerList>
						<LayerRow>
							<LayerName>
								<LayerIcon color='#f5d60e' />
								Layer 2
							</LayerName>
							<LayerBar $color='#f5d60e' />
						</LayerRow>
						<LayerRow>
							<LayerName $selected>
								<LayerIcon color='#6f9bd0' />
								Layer 1
							</LayerName>
							<LayerBar $color='#6f9bd0' />
						</LayerRow>
					</LayerList>
				</Panel>

				<RightBar>
					{rightTools.map((group, g) => (
						<div key={g}>
							{g > 0 && <RightSep />}
							{group.map((n) => (
								<RightTool key={n}>
									<Icon name={n} />
								</RightTool>
							))}
						</div>
					))}
				</RightBar>
			</Main>

			<PaletteRow>
				<NoColor>
					<NoColorMark />
				</NoColor>
				<Swatches>
					{palette.map((c, i) => (
						<Swatch key={i} $c={`#${c}`} />
					))}
				</Swatches>
				<PaletteEnd>
					<Icon name='up' size={14} />
					<Icon name='down' size={14} />
					<PaletteMenu>
						<Icon name='menu' size={13} />
					</PaletteMenu>
				</PaletteEnd>
			</PaletteRow>

			<StatusBar>
				<StatusLabel $w={60} $pad={27}>
					Fill:
				</StatusLabel>
				<FillSwatch />
				<StatusBox $w={62} $ml={53} />
				<StatusSep $ml={135} />
				<StatusBox $w={69} $ml={817} $plain />
				<StatusSep $ml={31} />
				<StatusLabel $w={98} $pad={10}>
					X:<CoordValue>219.07</CoordValue>
				</StatusLabel>
				<StatusBox $w={93} $ml={0} />
				<StatusBox $w={101} $ml={21} />
			</StatusBar>
		</Root>
	)
}

export default App
